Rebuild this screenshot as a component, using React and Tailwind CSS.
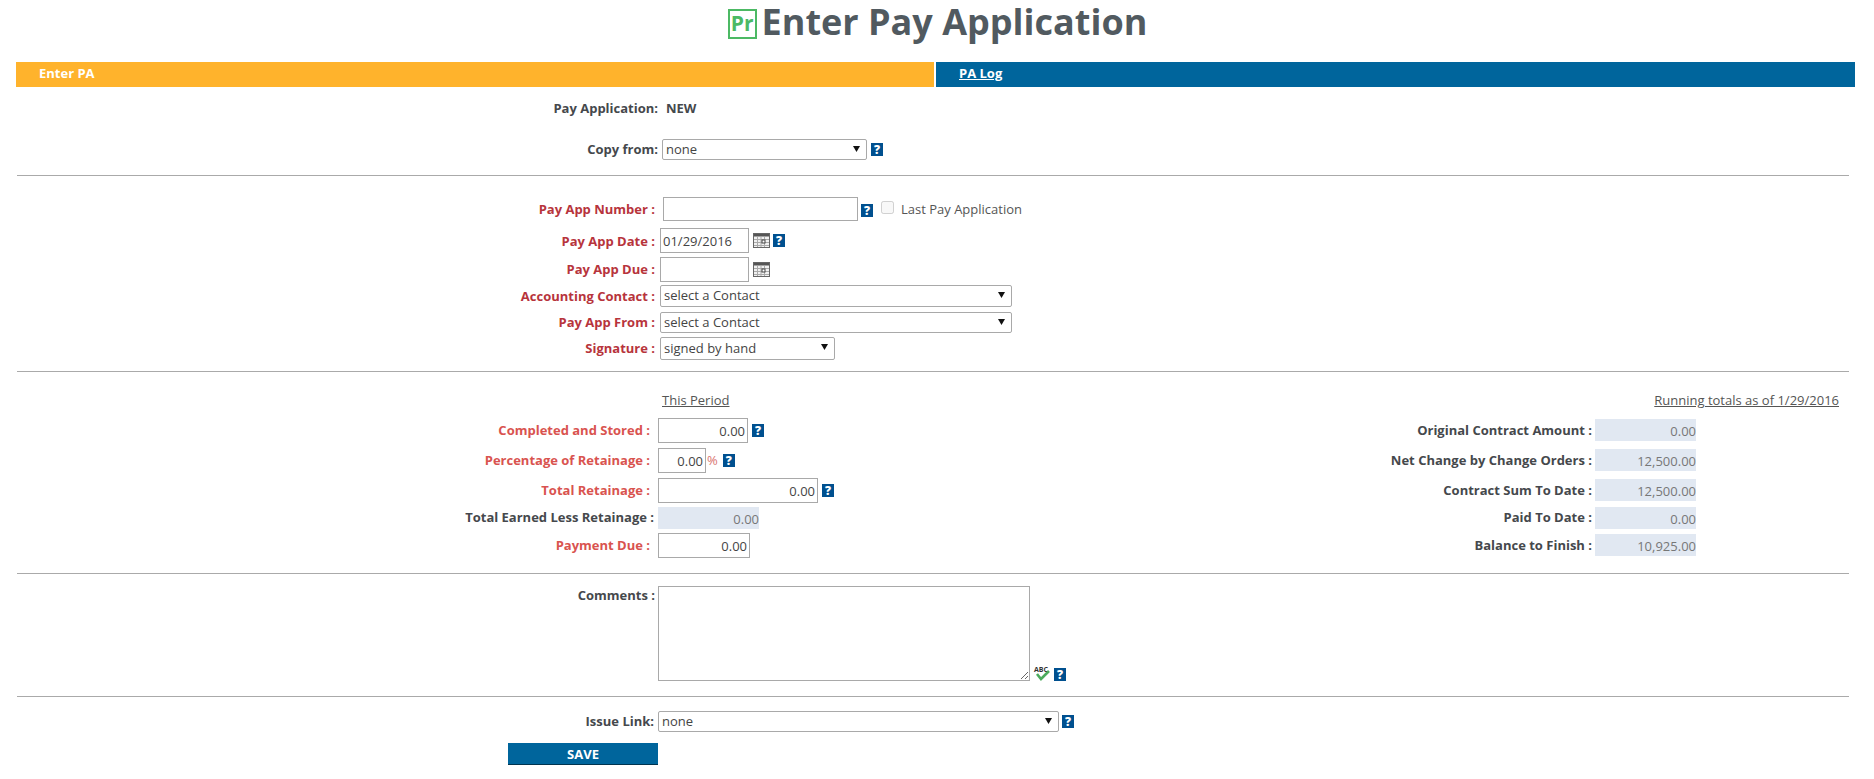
function Help() {
  return (
    <span className="w-[12px] h-[13px] bg-[#00508f] text-white text-[12px] font-extrabold leading-[13px] text-center shrink-0 select-none">?</span>
  );
}

function CalendarIcon() {
  return (
    <svg width="17" height="15" viewBox="0 0 17 15" className="shrink-0">
      <rect x="0.5" y="0.5" width="16" height="14" fill="#f0f0f0" stroke="#666" />
      <rect x="1" y="1" width="15" height="2.5" fill="#555" />
      <path d="M1 6.5H16M1 9.5H16M1 12.5H16M4.5 4V14M8 4V14M11.5 4V14" stroke="#aaa" strokeWidth="1" fill="none" />
      <rect x="9" y="7" width="3" height="3" fill="#fff" stroke="#444" strokeWidth="1" />
    </svg>
  );
}

function SpellIcon() {
  return (
    <span className="relative w-[17px] h-[15px] shrink-0">
      <span className="absolute left-0 top-0 text-[7px] leading-[8px] font-bold text-[#333]">ABC</span>
      <svg width="17" height="15" viewBox="0 0 17 15" className="absolute left-0 top-0">
        <path d="M3 8l4 5 8-8" stroke="#4cab5c" strokeWidth="2.6" fill="none" />
      </svg>
    </span>
  );
}

function Select({ value, className }) {
  return (
    <div className={`relative shrink-0 ${className}`}>
      <select defaultValue={value} className="appearance-none w-full h-full bg-white border border-[#a9a9a9] rounded-[2px] pl-[3px] text-[13px] font-normal text-[#444] outline-none">
        <option>{value}</option>
      </select>
      <svg width="7" height="6" viewBox="0 0 7 6" className="absolute right-[7px] top-[7px] pointer-events-none">
        <path d="M0 0H7L3.5 6Z" fill="#111" />
      </svg>
    </div>
  );
}

function Field({ value = '', className = '', right }) {
  return (
    <input
      readOnly
      value={value}
      className={`shrink-0 h-full bg-white border border-[#a9a9a9] text-[13px] font-normal text-[#444] px-[2px] outline-none ${right ? 'text-right' : ''} ${className}`}
    />
  );
}

function Hr({ className }) {
  return <div className={`ml-[17px] w-[1832px] h-px bg-[#aaaaaa] ${className}`} />;
}

const periodRows = [
  { h: 'h-[30px]', label: 'Completed and Stored :', total: 'Original Contract Amount :', amount: '0.00' },
  { h: 'h-[30px]', label: 'Percentage of Retainage :', total: 'Net Change by Change Orders :', amount: '12,500.00' },
  { h: 'h-[29px]', label: 'Total Retainage :', total: 'Contract Sum To Date :', amount: '12,500.00' },
  { h: 'h-[26px]', label: 'Total Earned Less Retainage :', dark: true, total: 'Paid To Date :', amount: '0.00' },
  { h: 'h-[25px]', label: 'Payment Due :', total: 'Balance to Finish :', amount: '10,925.00' },
];

export default function App() {
  return (
    <div className="w-[1874px] h-[779px] bg-white overflow-hidden font-['Open_Sans',sans-serif] text-[13px] text-[#45484c]">
      {/* Title */}
      <div className="h-[62px] flex justify-center pl-[1px]">
        <div className="flex items-start gap-[5px]">
          <span className="mt-[9px] w-[29px] h-[30px] border-[2.5px] border-[#4cb964] text-[#4cb964] text-[21px] font-bold leading-[25px] text-center">Pr</span>
          <h1 className="text-[36px] leading-[44px] font-bold text-[#515a60]">Enter Pay Application</h1>
        </div>
      </div>

      {/* Tabs */}
      <div className="ml-[16px] w-[1839px] h-[25px] flex gap-[2px] font-bold leading-[23px] text-white">
        <div className="w-[918px] bg-[#ffb32c] pl-[23px]">Enter PA</div>
        <div className="flex-1 bg-[#00659c] pl-[23px] underline">PA Log</div>
      </div>

      <div className="mt-[12px] h-[20px] flex items-center font-bold">
        <div className="w-[658px] text-right">Pay Application:</div>
        <div className="ml-[8px]">NEW</div>
      </div>

      <div className="mt-[20px] h-[21px] flex items-center">
        <div className="w-[658px] text-right font-bold">Copy from:</div>
        <Select value="none" className="ml-[4px] w-[205px] h-full" />
        <span className="ml-[4px] flex"><Help /></span>
      </div>

      <Hr className="mt-[15px]" />

      {/* Contact details */}
      <div className="mt-[21px] h-[24px] flex items-center font-bold text-[#b7343c]">
        <div className="w-[655px] text-right pt-[2px]">Pay App Number :</div>
        <Field className="ml-[8px] w-[195px]" />
        <span className="ml-[3px] mt-[3px] flex"><Help /></span>
        <input type="checkbox" disabled className="ml-[8px] -mt-[3px] w-[13px] h-[13px]" />
        <span className="ml-[7px] pt-[2px] font-normal text-[#555]">Last Pay Application</span>
      </div>

      <div className="mt-[7px] h-[25px] flex items-center font-bold text-[#b7343c]">
        <div className="w-[655px] text-right pt-[2px]">Pay App Date :</div>
        <Field value="01/29/2016" className="ml-[5px] w-[89px]" />
        <span className="ml-[4px] flex"><CalendarIcon /></span>
        <span className="ml-[3px] flex"><Help /></span>
      </div>

      <div className="mt-[4px] h-[25px] flex items-center font-bold text-[#b7343c]">
        <div className="w-[655px] text-right">Pay App Due :</div>
        <Field className="ml-[5px] w-[89px]" />
        <span className="ml-[4px] flex"><CalendarIcon /></span>
      </div>

      <div className="mt-[3px] h-[22px] flex items-center font-bold text-[#b7343c]">
        <div className="w-[655px] text-right pt-[2px]">Accounting Contact :</div>
        <Select value="select a Contact" className="ml-[5px] w-[352px] h-full" />
      </div>

      <div className="mt-[5px] h-[21px] flex items-center font-bold text-[#b7343c]">
        <div className="w-[655px] text-right">Pay App From :</div>
        <Select value="select a Contact" className="ml-[5px] w-[352px] h-full" />
      </div>

      <div className="mt-[4px] h-[23px] flex items-center font-bold text-[#b7343c]">
        <div className="w-[655px] text-right">Signature :</div>
        <Select value="signed by hand" className="ml-[5px] w-[175px] h-full" />
      </div>

      <Hr className="mt-[11px]" />

      {/* This period / running totals */}
      <div className="mt-[19px] h-[18px] flex items-center leading-[18px] underline text-[#555]">
        <div className="ml-[662px]">This Period</div>
        <div className="ml-auto mr-[35px]">Running totals as of 1/29/2016</div>
      </div>

      <div className="mt-[9px] flex flex-col">
        {periodRows.map((row, i) => (
          <div key={row.label} className={`${row.h} flex items-start`}>
            <div className={`${row.dark ? 'w-[654px] leading-[21px]' : 'w-[650px] leading-[25px] text-[#d9534f]'} font-bold text-right`}>
              {row.label}
            </div>
            <div className={`${row.dark ? 'ml-[4px] h-[22px]' : 'ml-[8px] h-[25px]'} w-[240px] flex items-center shrink-0`}>
              {i === 0 && <><Field value="0.00" right className="w-[90px]" /><span className="ml-[4px] flex"><Help /></span></>}
              {i === 1 && <><Field value="0.00" right className="w-[48px]" /><span className="ml-px text-[#d9736f]">%</span><span className="ml-[5px] flex"><Help /></span></>}
              {i === 2 && <><Field value="0.00" right className="w-[160px]" /><span className="ml-[4px] flex"><Help /></span></>}
              {i === 3 && <div className="w-[101px] h-[22px] bg-[#e1e8f2] text-[#777] leading-[24px] text-right">0.00</div>}
              {i === 4 && <Field value="0.00" right className="w-[92px]" />}
            </div>
            <div className={`w-[694px] font-bold text-right ${row.dark ? 'leading-[21px]' : 'leading-[25px]'}`}>{row.total}</div>
            <div className={`ml-[3px] w-[101px] h-[22px] bg-[#e1e8f2] text-[#777] leading-[24px] text-right shrink-0 ${row.dark ? '' : 'mt-px'}`}>
              {row.amount}
            </div>
          </div>
        ))}
      </div>

      <Hr className="mt-[15px]" />

      {/* Comments */}
      <div className="mt-[12px] h-[95px] flex items-start">
        <div className="w-[655px] text-right font-bold leading-[18px]">Comments :</div>
        <textarea readOnly className="ml-[3px] w-[372px] h-[95px] shrink-0 border border-[#a9a9a9] bg-white outline-none" />
        <div className="ml-[4px] self-end flex items-end gap-[3px]">
          <SpellIcon />
          <Help />
        </div>
      </div>

      <Hr className="mt-[15px]" />

      {/* Issue link */}
      <div className="mt-[14px] h-[21px] flex items-center">
        <div className="w-[654px] text-right font-bold">Issue Link:</div>
        <Select value="none" className="ml-[4px] w-[401px] h-full" />
        <span className="ml-[3px] flex"><Help /></span>
      </div>

      <div className="mt-[11px] ml-[508px] w-[150px] h-[22px] bg-[#00659c] border-b border-[#00344f] text-white text-center font-bold leading-[22px]">SAVE</div>
    </div>
  );
}
